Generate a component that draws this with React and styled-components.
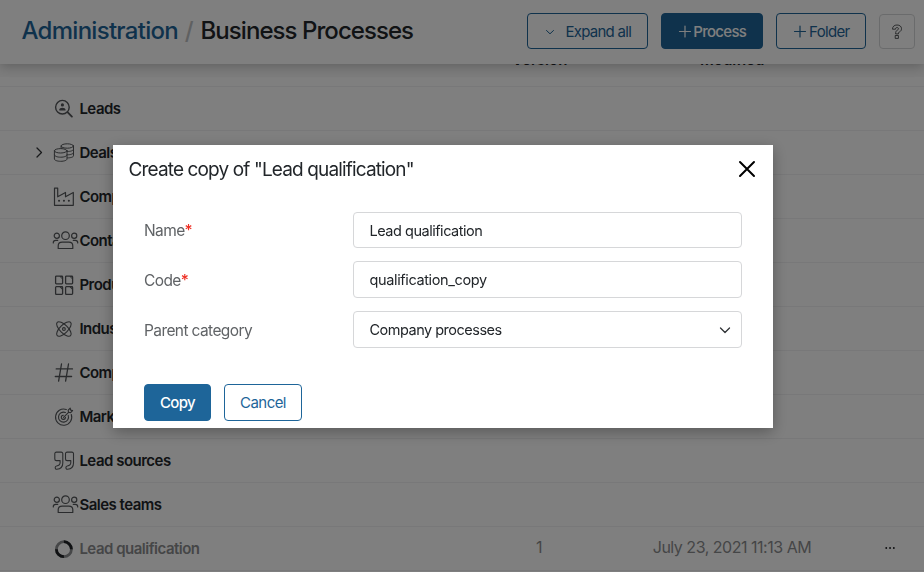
import React from 'react';
import styled, { createGlobalStyle } from 'styled-components';

const Global = createGlobalStyle`
  *, *::before, *::after { box-sizing: border-box; }
  html, body, #root { height: 100%; }
  body {
    margin: 0;
    overflow: hidden;
    background: #fff;
    font-family: Inter, "Liberation Sans", sans-serif;
    font-size: 15px;
    color: #22262a;
  }
  button, input { font: inherit; }
`;

const Page = styled.div`
  height: 572px;
  display: flex;
  flex-direction: column;
  overflow: hidden;
`;

const Header = styled.header`
  position: relative;
  z-index: 1;
  flex: none;
  height: 64px;
  padding: 0 9px 2px 21.5px;
  display: flex;
  align-items: center;
  justify-content: space-between;
  background: #fff;
  box-shadow: 0 2px 12px rgba(0, 0, 0, 0.25);
`;

const Crumbs = styled.h1`
  margin: 0;
  display: flex;
  font-size: 24px;
  line-height: 30px;
  font-weight: 500;
  white-space: nowrap;
`;

const CrumbLink = styled.a`
  color: #1e6599;
  letter-spacing: -0.72px;
`;

const Slash = styled.span`
  width: 22.5px;
  text-align: center;
  color: #bfc1c3;
`;

const Current = styled.span`
  letter-spacing: -0.94px;
`;

const Actions = styled.div`
  display: flex;
  align-items: center;
  gap: 13px;
`;

const Button = styled.button`
  width: ${(p) => p.$width}px;
  height: ${(p) => p.$height || 36}px;
  padding: 0;
  display: flex;
  align-items: center;
  justify-content: center;
  gap: ${(p) => p.$gap || 0}px;
  border: 1px solid #1e6599;
  border-radius: 4px;
  background: ${(p) => (p.$primary ? '#1e6599' : '#fff')};
  color: ${(p) => (p.$primary ? '#fff' : '#1e6599')};
  font-size: 15px;
  font-weight: ${(p) => (p.$primary ? 500 : 400)};
  letter-spacing: ${(p) => p.$track ?? -0.55}px;
  white-space: nowrap;
`;

const HeaderButton = styled(Button)`
  padding-left: 1.5px;
`;

const HelpButton = styled(Button)`
  border-color: #d5d6d8;
  margin-top: 1px;
`;

const TableHead = styled.div`
  flex: none;
  height: 13px;
  display: grid;
  grid-template-columns: 512px 188px 1fr;
  background: #fafafa;
  font-weight: 600;
  line-height: 20px;
`;

const HeadCell = styled.span`
  grid-column: ${(p) => p.$column};
  height: 20px;
  margin-top: -14px;
`;

const Rows = styled.div`
  flex: none;
  margin-top: 9px;
  border-top: 1px solid #f1f1f2;
`;

const Row = styled.div`
  height: 44px;
  display: grid;
  grid-template-columns: 28px 25px 26.4px 399.6px 120px 266px 51px;
  align-items: center;
  border-bottom: 1px solid #f1f1f2;
  color: ${(p) => (p.$muted ? '#8b8c8e' : '#22262a')};
`;

const IconCell = styled.span`
  grid-column: ${(p) => p.$column};
  display: flex;
  justify-content: ${(p) => (p.$center ? 'center' : 'flex-start')};
`;

const RowName = styled.span`
  grid-column: 4;
  font-weight: 600;
  letter-spacing: -0.5px;
`;

const RowValue = styled.span`
  grid-column: ${(p) => p.$column};
  padding-bottom: 3px;
  text-align: center;
  font-size: 16px;
  letter-spacing: -0.48px;
`;

const Overlay = styled.div`
  position: fixed;
  inset: 0;
  z-index: 2;
  display: flex;
  align-items: flex-start;
  padding: 145px 0 0 113px;
  background: rgba(0, 0, 0, 0.5);
`;

const Dialog = styled.section`
  width: 660px;
  height: 283px;
  padding: 0 31px 0 16px;
  background: #fff;
  box-shadow: 0 4px 14px rgba(0, 0, 0, 0.3);
`;

const DialogHeader = styled.div`
  height: 48px;
  margin: 0 -16px 0 -0.5px;
  display: flex;
  align-items: center;
  justify-content: space-between;
`;

const DialogTitle = styled.h2`
  margin: 0;
  font-size: 19px;
  font-weight: 400;
  letter-spacing: -0.86px;
`;

const Close = styled.button`
  width: 22px;
  height: 22px;
  padding: 0;
  border: 0;
  background: none;
  display: flex;
`;

const Form = styled.form`
  margin: 19px 0 0 15px;
  display: grid;
  grid-template-columns: 209px 389px;
  grid-template-rows: 36px 37px 37px;
  row-gap: 13px;
  align-items: center;
`;

const Label = styled.label`
  padding-top: 1px;
  color: #606366;
  font-size: 15.5px;
  letter-spacing: -0.6px;
`;

const Required = styled.span`
  color: #ee2f24;
  font-weight: 500;
`;

const Input = styled.input`
  width: 100%;
  height: 100%;
  padding: 0 15.5px;
  border: 1px solid #d6d7d9;
  border-radius: 4px;
  background: #fff;
  color: #22262a;
  font-size: 14.5px;
  letter-spacing: ${(p) => p.$track}px;
  outline: none;
`;

const Select = styled.div`
  height: 100%;
  padding: 0 10px 0 15.5px;
  display: flex;
  align-items: center;
  justify-content: space-between;
  border: 1px solid #d6d7d9;
  border-radius: 4px;
  font-size: 14.5px;
  letter-spacing: -0.5px;
`;

const Footer = styled.div`
  margin: 36px 0 0 15px;
  display: flex;
  gap: 13px;
`;

const Svg = styled.svg`
  display: block;
  flex: none;
  overflow: visible;
  fill: none;
  stroke: ${(p) => p.$color || '#54575a'};
  stroke-width: ${(p) => p.$weight || 1.2};
  stroke-linecap: round;
  stroke-linejoin: round;
`;

const Icon = ({ w = 22, h = 22, children, ...rest }) => (
  <Svg width={w} height={h} viewBox={`0 0 ${w} ${h}`} {...rest}>{children}</Svg>
);

const LeadsIcon = () => (
  <Icon $weight={1.4}>
    <circle cx="9.4" cy="9.2" r="6.8" />
    <path d="M14.500 14.200 18.900 18.600" strokeWidth="1.900" />
    <circle cx="9.400" cy="6.900" r="1.600" fill="#54575a" stroke="none" />
    <path d="M6.300 12.600v-1c0-1.100 1.300-1.900 3.100-1.900s3.100.8 3.100 1.900v1z" fill="#54575a" stroke="none" />
  </Icon>
);

const DealsIcon = () => (
  <Icon $weight={1}>
    <ellipse cx="14.300" cy="4" rx="6.200" ry="2.200" />
    <path d="M20.500 4v9.800c0 1.200-2.600 2.100-6 2.100M8.100 4v2.500M20.500 7.300c0 1.300-2.700 2.200-6 2.200M20.500 10.600c0 1.300-2.700 2.200-6 2.200" />
    <ellipse cx="7.700" cy="8.800" rx="6.300" ry="2.200" />
    <path d="M1.400 8.800v8.200c0 1.300 2.800 2.300 6.300 2.300s6.300-1 6.300-2.300V8.800M1.400 12.900c0 1.300 2.800 2.300 6.300 2.300s6.300-1 6.300-2.300" />
  </Icon>
);

const FactoryIcon = () => (
  <Icon>
    <path d="M1.500 19.300V2.200h3.200v8.600l7.800-4.300v4.300l7.800-4.300v12.800z" />
    <path d="M6 14.700h.1M10.900 14.700h.1M15.800 14.700h.1" strokeWidth="2" />
  </Icon>
);

const PeopleIcon = () => (
  <Icon w={26}>
    <circle cx="12.500" cy="5.700" r="3.800" />
    <circle cx="3.800" cy="5.700" r="2.600" />
    <circle cx="21.200" cy="5.700" r="2.600" />
    <path d="M5.200 18.500v-2.600c0-2.400 1.600-3.800 4-3.800h6.600c2.400 0 4 1.400 4 3.800v2.600zM.3 13v-.4c0-1.300 1-2.200 2.400-2.200h2M24.700 13v-.4c0-1.300-1-2.200-2.400-2.200h-2" />
  </Icon>
);

const ProductsIcon = () => (
  <Icon $weight={1.300}>
    {[[2.600, 2.100], [12.600, 2.100], [2.600, 12.700], [12.600, 12.700]].map(([x, y]) => (
      <g key={`${x}-${y}`} transform={`translate(${x} ${y})`}>
        <rect width="7" height="7.700" rx=".8" />
        <path d="M4.800.4h1.800v1.800z" strokeWidth=".9" />
      </g>
    ))}
  </Icon>
);

const AtomIcon = () => (
  <Icon $weight={1.100}>
    <ellipse cx="10.900" cy="11" rx="9.500" ry="4" transform="rotate(45 10.900 11)" />
    <ellipse cx="10.900" cy="11" rx="9.500" ry="4" transform="rotate(-45 10.900 11)" />
    <circle cx="10.900" cy="11" r="1.400" />
  </Icon>
);

const HashIcon = () => (
  <Icon $weight={1.300}>
    <path d="M8.500 2 5.600 19.200M15.500 2l-2.900 17.200M3.200 6.900h16.300M2.300 14.500h16.300" />
  </Icon>
);

const TargetIcon = () => (
  <Icon $weight={1.100}>
    <path d="M13.300 3.500A8.100 8.100 0 1 0 18.300 8.500M12.400 6.500a5 5 0 1 0 2.800 2.900M10.300 9.200a2.100 2.100 0 1 0 2.200 2.200" />
    <path d="m10.500 11.400 5.300-5.300M15.500 6.300l-.3-2.100 2-2 .5 1.900 1.900.5-2 2z" />
  </Icon>
);

const QuotesIcon = () => (
  <Icon $weight={1.100}>
    {[1.600, 12.300].map((x) => (
      <path key={x} transform={`translate(${x} 1.600)`} d="M8.200 9.500V2.200c0-1.100-.6-1.700-1.600-1.700H1.800C.8.500.2 1.100.2 2.200v5.100c0 1.100.6 1.700 1.600 1.700h3.700v2c0 2.200-1.100 3.200-3.500 3.400-1 .1-1.400.6-1.400 1.600 0 1.200.6 1.800 1.600 1.700 4-.2 6-2.300 6-6.200z" />
    ))}
  </Icon>
);

const RingIcon = () => (
  <Icon $weight={2.800}>
    <circle cx="10.900" cy="11.200" r="7.500" stroke="#8c8e90" />
    <path d="M10.900 3.700A7.500 7.500 0 0 1 18.400 11.200M3.400 11.200A7.500 7.500 0 0 0 10.900 18.700" stroke="#202326" strokeLinecap="butt" />
  </Icon>
);

const Plus = ({ color }) => (
  <Icon w={12} h={12} $color={color} $weight={1.200}><path d="M.5 6.500h11M6 1v11" /></Icon>
);

const items = [
  { name: 'Leads', icon: LeadsIcon },
  { name: 'Deals', icon: DealsIcon, expandable: true },
  { name: 'Companies', icon: FactoryIcon },
  { name: 'Contacts', icon: PeopleIcon },
  { name: 'Products', icon: ProductsIcon },
  { name: 'Industries', icon: AtomIcon },
  { name: 'Company codes', icon: HashIcon },
  { name: 'Marketing', icon: TargetIcon },
  { name: 'Lead sources', icon: QuotesIcon },
  { name: 'Sales teams', icon: PeopleIcon },
  { name: 'Lead qualification', icon: RingIcon, version: '1', modified: 'July 23, 2021 11:13 AM' },
];

export default function App() {
  return (
    <Page>
      <Global />
      <Header>
        <Crumbs>
          <CrumbLink>Administration</CrumbLink>
          <Slash>/</Slash>
          <Current>Business Processes</Current>
        </Crumbs>
        <Actions>
          <HeaderButton $width={121} $gap={10} $track={-0.72}>
            <Icon w={10} h={10} $color="#1e6599" $weight={1}><path d="m1.500 4.500 3.500 3.300 3.500-3.300" /></Icon>
            Expand all
          </HeaderButton>
          <HeaderButton $width={102} $primary $gap={2} $track={-0.68}><Plus color="#fff" />Process</HeaderButton>
          <HeaderButton $width={90} $gap={3} $track={-0.7}><Plus color="#1e6599" />Folder</HeaderButton>
          <HelpButton $width={36} $height={35} aria-label="Help">
            <Icon w={12} h={16} $color="#303336" $weight={0.8}>
              <path d="M1.500 4.800C1.500 2.500 3.300 1 6 1s4.500 1.400 4.500 3.700c0 1.600-.8 2.600-2.200 3.300-.7.400-.9.900-.9 1.900H4.600c0-2.100.5-3.100 1.800-3.800.8-.5 1.100-.8 1.100-1.400 0-.7-.5-1.100-1.500-1.100s-1.500.4-1.500 1.200zM4.600 11.500h2.800v2.900H4.600z" />
            </Icon>
          </HelpButton>
        </Actions>
      </Header>
      <TableHead>
        <HeadCell $column={2}>Version</HeadCell>
        <HeadCell $column={3}>Modified</HeadCell>
      </TableHead>
      <Rows>
        {items.map(({ name, icon: ItemIcon, expandable, version, modified }) => (
          <Row key={name} $muted={Boolean(version)}>
            {expandable && (
              <IconCell $column={2} $center>
                <Icon w={12} h={12} $color="#303336" $weight={1.300}><path d="M2 1 6.500 5.500 2 10" /></Icon>
              </IconCell>
            )}
            <IconCell $column={3}><ItemIcon /></IconCell>
            <RowName>{name}</RowName>
            {version && <RowValue $column={5}>{version}</RowValue>}
            {modified && <RowValue $column={6}>{modified}</RowValue>}
            {version && (
              <IconCell $column={7} $center>
                <Icon w={12} h={4} $color="#202326" $weight={1.800}><path d="M2.200 1h.1M6 1h.1M9.800 1h.1" /></Icon>
              </IconCell>
            )}
          </Row>
        ))}
      </Rows>
      <Overlay>
        <Dialog role="dialog">
          <DialogHeader>
            <DialogTitle>Create copy of "Lead qualification"</DialogTitle>
            <Close aria-label="Close">
              <Icon $color="#000" $weight={2}><path d="m4 4 14 14M18 4 4 18" /></Icon>
            </Close>
          </DialogHeader>
          <Form>
            <Label>Name<Required>*</Required></Label>
            <Input defaultValue="Lead qualification" $track={-0.48} />
            <Label>Code<Required>*</Required></Label>
            <Input defaultValue="qualification_copy" $track={-0.37} />
            <Label>Parent category</Label>
            <Select>
              Company processes
              <Icon w={12} h={12} $color="#303336" $weight={1.300}><path d="m1.500 4 4.500 4.500L10.500 4" /></Icon>
            </Select>
          </Form>
          <Footer>
            <Button $width={67} $height={37} $primary $track={-0.65}>Copy</Button>
            <Button $width={78} $height={37}>Cancel</Button>
          </Footer>
        </Dialog>
      </Overlay>
    </Page>
  );
}
